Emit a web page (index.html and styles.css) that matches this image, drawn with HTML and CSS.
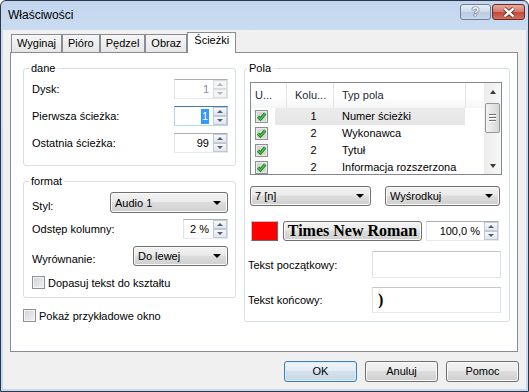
FILE: index.html
```html
<!DOCTYPE html>
<html lang="pl">
<head>
	<meta charset="UTF-8">
	<title>Właściwości</title>
	<link rel="stylesheet" href="styles.css">
</head>
<body>
	<svg class="defs" width="0" height="0">
		<symbol id="chk" viewBox="0 0 13 13">
			<rect x="0.5" y="0.5" width="12" height="12" fill="#e9eaeb" stroke="#8e8f8f"/>
			<rect x="2" y="2" width="9" height="9" fill="#d4d6d8"/>
			<path d="M3 6.6 L5.4 9 L10.2 3.4" fill="none" stroke="#1f6e1f" stroke-width="3"/>
			<path d="M3 6.6 L5.4 9 L10.2 3.4" fill="none" stroke="#3cc43c" stroke-width="1.6"/>
		</symbol>
	</svg>
	<div class="window">
		<div class="titlebar">
			<span class="title">Właściwości</span>
			<span class="cbtn help">?</span>
			<span class="cbtn close">
				<svg width="14" height="11" viewBox="0 0 14 11">
					<path d="M2.5 1.5 L11.5 9.5 M11.5 1.5 L2.5 9.5" stroke="#5b1a14" stroke-width="4"/>
					<path d="M2.5 1.5 L11.5 9.5 M11.5 1.5 L2.5 9.5" stroke="#fff" stroke-width="2.4"/>
				</svg>
			</span>
		</div>
		<div class="client">
			<div class="tabs">
				<span class="tab">Wyginaj</span>
				<span class="tab">Pióro</span>
				<span class="tab">Pędzel</span>
				<span class="tab">Obraz</span>
				<span class="tab cur">Ścieżki</span>
			</div>
			<div class="pane">
				<div class="col">
					<div class="group dane">
						<div class="legend">dane</div>
						<div class="row">
							<span class="lbl">Dysk:</span>
							<div class="spin disabled w54"><span class="val">1</span><span class="arr"><i class="up"></i><i class="down"></i></span></div>
						</div>
						<div class="row">
							<span class="lbl">Pierwsza ścieżka:</span>
							<div class="spin focus w54"><span class="val"><b class="sel">1</b></span><span class="arr"><i class="up"></i><i class="down"></i></span></div>
						</div>
						<div class="row">
							<span class="lbl">Ostatnia ścieżka:</span>
							<div class="spin w54"><span class="val">99</span><span class="arr"><i class="up"></i><i class="down"></i></span></div>
						</div>
					</div>
					<div class="group format">
						<div class="legend">format</div>
						<div class="row tall">
							<span class="lbl low">Styl:</span>
							<div class="combo w118">Audio 1</div>
						</div>
						<div class="row r2">
							<span class="lbl">Odstęp kolumny:</span>
							<div class="spin w45"><span class="val">2 %</span><span class="arr"><i class="up"></i><i class="down"></i></span></div>
						</div>
						<div class="row r3">
							<span class="lbl low">Wyrównanie:</span>
							<div class="combo w95">Do lewej</div>
						</div>
						<label class="check r4"><span class="cb"></span>Dopasuj tekst do kształtu</label>
					</div>
					<label class="check outside"><span class="cb"></span>Pokaż przykładowe okno</label>
				</div>
				<div class="col">
					<div class="group pola">
						<div class="legend">Pola</div>
						<div class="list">
							<div class="lv">
								<div class="lv-head">
									<span class="c1">U...</span>
									<span class="c2">Kolu...</span>
									<span class="c3">Typ pola</span>
									<span></span>
								</div>
								<div class="lv-row hot">
									<span class="c1"><svg width="13" height="13"><use href="#chk"/></svg></span>
									<span class="c2">1</span>
									<span class="c3">Numer ścieżki</span>
								</div>
								<div class="lv-row">
									<span class="c1"><svg width="13" height="13"><use href="#chk"/></svg></span>
									<span class="c2">2</span>
									<span class="c3">Wykonawca</span>
								</div>
								<div class="lv-row">
									<span class="c1"><svg width="13" height="13"><use href="#chk"/></svg></span>
									<span class="c2">2</span>
									<span class="c3">Tytuł</span>
								</div>
								<div class="lv-row">
									<span class="c1"><svg width="13" height="13"><use href="#chk"/></svg></span>
									<span class="c2">2</span>
									<span class="c3">Informacja rozszerzona</span>
								</div>
							</div>
							<div class="vscroll">
								<span class="sb-btn"><i class="tri-up"></i></span>
								<span class="thumb"><i></i><i></i><i></i></span>
								<span class="sb-fill"></span>
								<span class="sb-btn"><i class="tri-down"></i></span>
							</div>
						</div>
						<div class="prow combos">
							<div class="combo w121">7 [n]</div>
							<div class="combo w115">Wyśrodkuj</div>
						</div>
						<div class="prow font">
							<span class="swatch"></span>
							<span class="btn tnr">Times New Roman</span>
							<div class="spin w73"><span class="val">100,0 %</span><span class="arr"><i class="up"></i><i class="down"></i></span></div>
						</div>
						<div class="prow text1">
							<span class="lbl">Tekst początkowy:</span>
							<span class="edit"></span>
						</div>
						<div class="prow text2">
							<span class="lbl">Tekst końcowy:</span>
							<span class="edit"><b class="paren">)</b></span>
						</div>
					</div>
				</div>
			</div>
			<div class="buttons">
				<span class="btn def">OK</span>
				<span class="btn">Anuluj</span>
				<span class="btn">Pomoc</span>
			</div>
		</div>
	</div>
</body>
</html>
```

FILE: styles.css
```css
*{
	margin: 0;
	padding: 0;
	box-sizing: border-box;
}
body{
	font-family: "Liberation Sans", Arial, sans-serif;
	font-size: 11px;
	color: #000;
	background: #fff;
}
.defs{
	position: absolute;
}
.window{
	width: 529px;
	height: 392px;
	border: 1px solid #2c3646;
	border-radius: 6px 6px 0 0;
	background: linear-gradient(#c2d6ef, #cbdcf1 30px, #c5d9f0);
	padding: 0 2px 2px;
	display: flex;
	flex-direction: column;
}
.titlebar{
	height: 29px;
	display: flex;
	align-items: flex-start;
	padding: 0 1px 0 5px;
}
.title{
	flex: 1;
	font-size: 12px;
	line-height: 14px;
	padding-top: 7px;
}
.cbtn{
	height: 16px;
	margin-top: 3px;
	border-radius: 3px;
	display: flex;
	align-items: center;
	justify-content: center;
}
.help{
	width: 31px;
	margin-right: 1px;
	border: 1px solid #6d7f99;
	background: linear-gradient(#e6eef8, #cfdbea 50%, #b9cbe1 51%, #c9d9ec);
	color: #fff;
	font-weight: bold;
	font-size: 13px;
	line-height: 14px;
	text-shadow: 0 0 1px #2d4160, 0 0 1px #2d4160, 0 0 1px #2d4160;
}
.close{
	width: 33px;
	border: 1px solid #6b2a24;
	background: linear-gradient(#e8a89c, #d6776a 50%, #c3463a 51%, #d2705f);
}
.client{
	flex: 1;
	background: #f0f0f0;
	padding: 2px 8px 0 7px;
	display: flex;
	flex-direction: column;
}
.tabs{
	display: flex;
	align-items: flex-end;
	height: 20px;
	padding-left: 1px;
	position: relative;
	z-index: 1;
}
.tab{
	height: 18px;
	line-height: 16px;
	padding: 0 5px;
	border: 1px solid #898c95;
	border-bottom: 0;
	background: linear-gradient(#f6f6f6, #e6e6e6);
}
.tab.cur{
	height: 21px;
	margin-bottom: -1px;
	line-height: 14px;
	padding: 0 6px;
	background: #fff;
}
.pane{
	height: 300px;
	border: 1px solid #898c95;
	background: #fff;
	padding: 15px 7px 0 12px;
	display: grid;
	grid-template-columns: 213px 266px;
	column-gap: 8px;
	align-items: start;
}
.group{
	border: 1px solid #d5dfe5;
	border-radius: 3px;
	padding: 0 7px 0 8px;
}
.legend{
	width: max-content;
	height: 14px;
	line-height: 14px;
	margin: -8px 0 4px -3px;
	padding: 0 2px;
	background: #fff;
}
.dane{
	height: 98px;
}
.format{
	height: 117px;
	margin-top: 15px;
}
.row{
	display: flex;
	align-items: center;
	height: 20px;
}
.row + .row{
	margin-top: 7px;
}
.row.tall{
	height: 21px;
}
.row.r2{
	margin-top: 6px;
}
.lbl{
	flex: 1;
	line-height: 14px;
}
.lbl.low{
	padding-top: 6px;
}
.check{
	display: flex;
	align-items: center;
	height: 13px;
	line-height: 14px;
}
.check.r4{
	margin-top: 10px;
}
.check.outside{
	margin-top: 11px;
}
.cb{
	width: 13px;
	height: 13px;
	margin-right: 3px;
	border: 1px solid #8e8f8f;
	background: linear-gradient(135deg, #cfd2d6, #f3f3f4);
	box-shadow: inset 0 0 0 1px #f4f4f4;
}

/* spinner */
.spin{
	display: flex;
	height: 20px;
	border: 1px solid;
	border-color: #abadb3 #dbdfe6 #e3e9ef #e2e3ea;
	background: #fff;
}
.spin .val{
	flex: 1;
	text-align: right;
	line-height: 18px;
	padding-right: 3px;
}
.spin .arr{
	width: 15px;
	display: flex;
	flex-direction: column;
	padding: 0 0 0 1px;
}
.spin .arr i{
	flex: 1;
	border: 1px solid #c3c9d2;
	background: linear-gradient(#f6f8fa, #e1e6ec);
	display: flex;
	align-items: center;
	justify-content: center;
}
.spin .arr i::after{
	content: "";
	border: 3px solid transparent;
}
.spin .arr .up::after{
	border-bottom: 3px solid #4c607a;
	border-top: 0;
}
.spin .arr .down::after{
	border-top: 3px solid #4c607a;
	border-bottom: 0;
}
.spin.disabled .val{
	color: #8d8d8d;
}
.spin.disabled .arr i{
	border-color: #dadcde;
	background: #f4f4f4;
}
.spin.disabled .arr .up::after{
	border-bottom-color: #b0b6bf;
}
.spin.disabled .arr .down::after{
	border-top-color: #b0b6bf;
}
.spin.focus{
	border-color: #3d7bad #a4c9e3 #b7d9ed #b5cfe7;
}
.sel{
	font-weight: normal;
	background: #3399ff;
	color: #fff;
	padding: 1px 1px 2px;
}
.w54{ width: 54px; }
.w45{ width: 45px; }
.w73{ width: 73px; }

/* buttons, combos */
.btn, .combo{
	height: 21px;
	border: 1px solid #707070;
	border-radius: 3px;
	background: linear-gradient(#f2f2f2, #ebebeb 45%, #dddddd 50%, #cfcfcf);
	box-shadow: inset 0 0 0 1px #fbfbfb;
}
.btn{
	width: 73px;
	text-align: center;
	line-height: 19px;
}
.btn.def{
	border-color: #3c7fb1;
	background: linear-gradient(#eef4f9, #e3ecf4 45%, #d3e0ec 50%, #c8d8e6);
	box-shadow: inset 0 0 0 1px #d7f1fc;
}
.combo{
	display: flex;
	align-items: center;
	padding: 0 6px 0 4px;
}
.combo::after{
	content: "";
	margin-left: auto;
	border: 4px solid transparent;
	border-top: 4px solid #000;
	border-bottom: 0;
}
.w118{ width: 118px; }
.w95{ width: 95px; }
.w121{ width: 121px; height: 20px; }
.w115{ width: 115px; height: 20px; }
.row.r3 .combo{
	height: 20px;
}

/* Pola */
.pola{
	height: 254px;
	padding: 0 7px 0 5px;
}
.pola .legend{
	margin-bottom: 7px;
}
.list{
	height: 93px;
	border: 1px solid #828790;
	display: flex;
	overflow: hidden;
}
.lv{
	flex: 1;
}
.lv-head, .lv-row{
	display: grid;
	grid-template-columns: 36px 47px 132px 1fr;
}
.lv-head{
	height: 25px;
	background: linear-gradient(#fff 60%, #f4f5f7);
}
.lv-head span{
	border-right: 1px solid #e3e4e6;
	padding-top: 5px;
	line-height: 14px;
	color: #1e2a38;
}
.lv-head span:last-child{
	border-right: 0;
}
.lv-head .c1{ padding-left: 4px; }
.lv-head .c2{ padding-left: 8px; }
.lv-head .c3{ padding-left: 8px; }
.lv-row{
	height: 17px;
	line-height: 17px;
}
.lv-row.hot{
	background: linear-gradient(#ebebeb, #e6e6e6) 24px 0 / 190px 100% no-repeat;
}
.lv-row .c1{
	padding: 2px 0 0 4px;
	line-height: 0;
}
.lv-row .c2{
	text-align: center;
	padding-left: 6px;
}
.lv-row .c3{
	padding-left: 8px;
	white-space: nowrap;
}
.vscroll{
	width: 17px;
	background: linear-gradient(90deg, #ececec, #f7f7f7);
	display: flex;
	flex-direction: column;
}
.sb-btn{
	height: 17px;
	display: flex;
	align-items: center;
	justify-content: center;
}
.tri-up, .tri-down{
	border: 3.5px solid transparent;
}
.tri-up{
	border-bottom: 4px solid #3b3b3b;
	border-top: 0;
}
.tri-down{
	border-top: 4px solid #3b3b3b;
	border-bottom: 0;
}
.thumb{
	height: 30px;
	margin: 3px 1px 0;
	border: 1px solid #979797;
	border-radius: 2px;
	background: linear-gradient(90deg, #f3f3f3, #e4e4e4 50%, #d6d6d6);
	display: flex;
	flex-direction: column;
	align-items: center;
	justify-content: center;
	gap: 1px;
}
.thumb i{
	width: 7px;
	height: 1px;
	background: #707070;
	border-bottom: 1px solid #fff;
	box-sizing: content-box;
}
.sb-fill{
	flex: 1;
}
.prow{
	display: flex;
	align-items: center;
}
.combos{
	margin-top: 11px;
	gap: 14px;
}
.font{
	margin-top: 15px;
	height: 20px;
}
.swatch{
	width: 27px;
	height: 20px;
	margin-left: 1px;
	background: #f00;
	border: 1px solid;
	border-color: #c0c0c0 #6a6a6a #6a6a6a #c0c0c0;
}
.btn.tnr{
	width: 139px;
	height: 20px;
	margin: 0 4px 0 5px;
	font-family: "Liberation Serif", "Times New Roman", serif;
	font-weight: bold;
	font-size: 16px;
	line-height: 18px;
}
.text1{
	margin-top: 10px;
	height: 27px;
}
.text2{
	margin-top: 9px;
	height: 26px;
}
.prow .lbl{
	margin-left: -2px;
}
.edit{
	width: 129px;
	height: 100%;
	margin-right: 1px;
	border: 1px solid;
	border-color: #c4c7cc #dbdfe6 #e3e9ef #e2e3ea;
	background: #fff;
	display: flex;
	align-items: center;
	padding-left: 5px;
}
.paren{
	font-family: "Liberation Serif", serif;
	font-size: 16px;
}

/* dialog buttons */
.buttons{
	display: flex;
	justify-content: flex-end;
	gap: 8px;
	margin: 9px -1px 0 0;
}
```
